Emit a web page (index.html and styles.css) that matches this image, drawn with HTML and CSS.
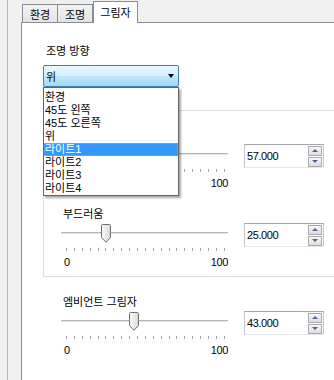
FILE: index.html
```html
<!DOCTYPE html>
<html lang="ko">
<head>
    <meta charset="UTF-8">
    <title>그림자 설정</title>
    <link rel="stylesheet" href="styles.css">
</head>
<body>
    <div class="frame">
        <div class="tabs">
            <div class="tab tab-env">환경</div>
            <div class="tab tab-light">조명</div>
            <div class="tab tab-shadow active">그림자</div>
        </div>

        <div class="pane">
            <div class="field-label">조명 방향</div>
            <div class="combo">
                <div class="combo-box">
                    <span>위</span>
                    <span class="combo-arrow"></span>
                </div>
                <ul class="combo-list">
                    <li>환경</li>
                    <li>45도 왼쪽</li>
                    <li>45도 오른쪽</li>
                    <li>위</li>
                    <li class="selected">라이트1</li>
                    <li>라이트2</li>
                    <li>라이트3</li>
                    <li>라이트4</li>
                </ul>
            </div>

            <div class="group">
                <div class="setting">
                    <!-- 목록에 가려진 항목 -->
                    <div class="setting-label"></div>
                    <div class="setting-row">
                        <div class="slider" data-value="57">
                            <div class="track"></div>
                            <div class="thumb"></div>
                            <div class="ticks"></div>
                            <div class="scale"><span></span><span>100</span></div>
                        </div>
                        <div class="spin">
                            <span class="spin-value">57.000</span>
                            <div class="spin-buttons">
                                <div class="spin-btn"><i class="up"></i></div>
                                <div class="spin-btn"><i class="down"></i></div>
                            </div>
                        </div>
                    </div>
                </div>

                <div class="setting">
                    <div class="setting-label">부드러움</div>
                    <div class="setting-row">
                        <div class="slider" data-value="25">
                            <div class="track"></div>
                            <div class="thumb"></div>
                            <div class="ticks"></div>
                            <div class="scale"><span>0</span><span>100</span></div>
                        </div>
                        <div class="spin">
                            <span class="spin-value">25.000</span>
                            <div class="spin-buttons">
                                <div class="spin-btn"><i class="up"></i></div>
                                <div class="spin-btn"><i class="down"></i></div>
                            </div>
                        </div>
                    </div>
                </div>
            </div>

            <div class="setting loose">
                <div class="setting-label">엠비언트 그림자</div>
                <div class="setting-row">
                    <div class="slider" data-value="43">
                        <div class="track"></div>
                        <div class="thumb"></div>
                        <div class="ticks"></div>
                        <div class="scale"><span>0</span><span>100</span></div>
                    </div>
                    <div class="spin">
                        <span class="spin-value">43.000</span>
                        <div class="spin-buttons">
                            <div class="spin-btn"><i class="up"></i></div>
                            <div class="spin-btn"><i class="down"></i></div>
                        </div>
                    </div>
                </div>
            </div>
        </div>
    </div>

    <script>
        // 슬라이더 눈금과 손잡이 위치
        const thumbSvg = '<svg width="10" height="19" viewBox="0 0 10 19">' +
            '<defs><linearGradient id="tg" x1="0" y1="0" x2="1" y2="0">' +
            '<stop offset="0" stop-color="#fbfbfb"/><stop offset="1" stop-color="#d9d9d9"/>' +
            '</linearGradient></defs>' +
            '<path d="M1.5 0.5 H8.5 Q9.5 0.5 9.5 1.5 V13.5 L5 18.3 L0.5 13.5 V1.5 Q0.5 0.5 1.5 0.5 Z" fill="url(#tg)" stroke="#6f6f6f"/>' +
            '</svg>';

        document.querySelectorAll('.slider').forEach(slider => {
            const value = Number(slider.dataset.value);
            const thumb = slider.querySelector('.thumb');
            thumb.innerHTML = thumbSvg;
            thumb.style.left = (value * 1.58) + 'px';

            const ticks = slider.querySelector('.ticks');
            for (let i = 0; i <= 20; i++) {
                const t = document.createElement('span');
                t.className = 'tick';
                ticks.appendChild(t);
            }
        });
    </script>
</body>
</html>
```

FILE: styles.css
```css
/* Vista 스타일 속성 패널 */
body {
    margin: 0;
    height: 380px;
    overflow: hidden;
    background: #f0f0f0;
    color: #000;
    font-family: "Noto Sans CJK KR", sans-serif;
    font-size: 11px;
}
.frame {
    margin-left: 7px;
    padding-left: 13px;
    height: 380px;
    border-left: 1px solid #b9b9b9;
}
.tabs {
    display: flex;
    align-items: flex-end;
    height: 22px;
    padding-left: 1px;
    position: relative;
    z-index: 1;
}
.tab {
    box-sizing: border-box;
    height: 18px;
    border: 1px solid #898c95;
    border-bottom: none;
    background: linear-gradient(#f3f3f3, #e3e3e3);
    display: flex;
    align-items: center;
    justify-content: center;
    line-height: 14px;
}
.tab-env { width: 36px; }
.tab-light { width: 35px; border-left: none; }
.tab-shadow { width: 45px; }
.tab.active {
    height: 22px;
    margin-bottom: -1px;
    background: #fff;
    padding-bottom: 2px;
}
.pane {
    box-sizing: border-box;
    background: #fff;
    border: 1px solid #898c95;
    border-bottom: none;
    margin-right: -10px;
    height: 358px;
    padding: 20px 0 0 21px;
}
.field-label {
    margin-left: 3px;
    line-height: 14px;
}
.combo {
    position: relative;
    width: 136px;
    height: 22px;
    margin-top: 8px;
}
.combo-box {
    box-sizing: border-box;
    height: 22px;
    border: 1px solid #3c7fb1;
    border-radius: 2px;
    background: linear-gradient(#eaf6fd 0%, #d9f0fc 48%, #bee6fd 52%, #a7d9f5 100%);
    display: flex;
    align-items: center;
    justify-content: space-between;
    padding: 0 4px 0 2px;
    line-height: 14px;
}
.combo-arrow {
    width: 0;
    height: 0;
    border-left: 3.5px solid transparent;
    border-right: 3.5px solid transparent;
    border-top: 4px solid #000;
}
.combo-list {
    position: absolute;
    top: 22px;
    left: 0;
    z-index: 2;
    box-sizing: border-box;
    width: 136px;
    margin: 0;
    padding: 3px 0 0;
    list-style: none;
    background: #fff;
    border: 1px solid #646464;
    box-shadow: 2px 2px 2px rgba(0, 0, 0, 0.35);
    font-family: "Liberation Sans", "Noto Sans CJK KR", sans-serif;
}
.combo-list li {
    height: 13px;
    line-height: 13px;
    padding-left: 1px;
}
.combo-list li.selected {
    background: #3399ff;
    color: #fff;
    outline: 1px dotted #f09a2a;
    outline-offset: -1px;
}
.group {
    margin-top: 23px;
    border: 1px solid #d5dfe5;
    border-right: none;
    padding: 16px 0 8px 17px;
}
.setting + .setting {
    margin-top: 17px;
}
.setting.loose {
    margin-top: 17px;
    padding-left: 18px;
}
.setting-label {
    margin-left: 2px;
    height: 14px;
    line-height: 14px;
}
.setting-row {
    display: flex;
    margin-top: 3px;
}
.slider {
    position: relative;
    width: 167px;
    height: 45px;
}
.track {
    margin-top: 9px;
    border-top: 1px solid #b4b4b4;
    border-bottom: 1px solid #e6e6e6;
}
.thumb {
    position: absolute;
    top: 1px;
    width: 10px;
    height: 19px;
}
.thumb svg {
    display: block;
}
.ticks {
    display: flex;
    justify-content: space-between;
    margin: 14px 3px 0 5px;
}
.tick {
    width: 1px;
    height: 3px;
    background: #a8a8a8;
}
.scale {
    display: flex;
    justify-content: space-between;
    height: 12px;
    margin: 5px 0 0 3px;
    line-height: 12px;
    font-family: "Liberation Sans", sans-serif;
    font-size: 11px;
    letter-spacing: -0.4px;
}
.spin {
    box-sizing: border-box;
    width: 80px;
    height: 24px;
    margin-left: 16px;
    border: 1px solid #c2c6cc;
    border-top-color: #a3a5aa;
    border-bottom-color: #e3e9ef;
    background: #fff;
    display: flex;
    align-items: center;
    justify-content: space-between;
    padding: 0 1px 0 2px;
}
.spin-value {
    font-family: "Liberation Sans", sans-serif;
    font-size: 11px;
    letter-spacing: -0.4px;
}
.spin-buttons {
    display: flex;
    flex-direction: column;
    gap: 1px;
}
.spin-btn {
    box-sizing: border-box;
    width: 14px;
    height: 10px;
    border: 1px solid #a9a9a9;
    background: linear-gradient(#f6f6f6, #dedede);
    display: flex;
    align-items: center;
    justify-content: center;
}
.spin-btn i {
    width: 0;
    height: 0;
    border-left: 3px solid transparent;
    border-right: 3px solid transparent;
}
.spin-btn .up { border-bottom: 3px solid #4c6490; }
.spin-btn .down { border-top: 3px solid #4c6490; }
```
